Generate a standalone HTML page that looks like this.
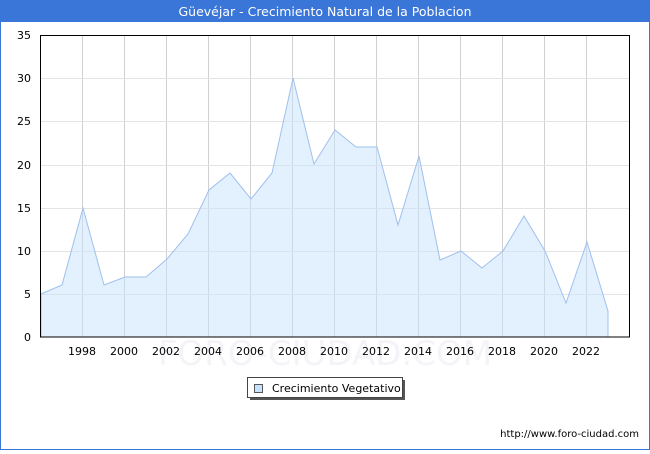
<!DOCTYPE html>
<html><head><meta charset="utf-8"><style>
html,body{margin:0;padding:0;background:#fff}
body{width:650px;height:450px;overflow:hidden;font-family:"DejaVu Sans","Liberation Sans",sans-serif}
</style></head><body>
<svg width="650" height="450" xmlns="http://www.w3.org/2000/svg" font-family="DejaVu Sans, Liberation Sans, sans-serif">
<rect x="0.5" y="0.5" width="649" height="449" fill="#fff" stroke="#3a75d8" stroke-width="1"/>
<rect x="0" y="0" width="650" height="22" fill="#3a75d8"/>
<text x="325" y="16" font-size="12.5" fill="#fff" text-anchor="middle">Güevéjar - Crecimiento Natural de la Poblacion</text>
<text x="325" y="365" font-size="34" fill="#f4f4f8" text-anchor="middle">FORO-CIUDAD.COM</text>
<g stroke="#d0d0d0" stroke-width="1">
<line x1="82.5" y1="35" x2="82.5" y2="337"/><line x1="124.5" y1="35" x2="124.5" y2="337"/><line x1="166.5" y1="35" x2="166.5" y2="337"/><line x1="208.5" y1="35" x2="208.5" y2="337"/><line x1="250.5" y1="35" x2="250.5" y2="337"/><line x1="292.5" y1="35" x2="292.5" y2="337"/><line x1="334.5" y1="35" x2="334.5" y2="337"/><line x1="376.5" y1="35" x2="376.5" y2="337"/><line x1="418.5" y1="35" x2="418.5" y2="337"/><line x1="460.5" y1="35" x2="460.5" y2="337"/><line x1="502.5" y1="35" x2="502.5" y2="337"/><line x1="544.5" y1="35" x2="544.5" y2="337"/><line x1="586.5" y1="35" x2="586.5" y2="337"/>
</g>
<g stroke="#e4e4e4" stroke-width="1">
<line x1="40" y1="294.5" x2="630" y2="294.5"/><line x1="40" y1="251.5" x2="630" y2="251.5"/><line x1="40" y1="208.5" x2="630" y2="208.5"/><line x1="40" y1="165.5" x2="630" y2="165.5"/><line x1="40" y1="121.5" x2="630" y2="121.5"/><line x1="40" y1="78.5" x2="630" y2="78.5"/>
</g>
<polygon fill="rgba(200,225,252,0.5)" stroke="#9fc0ee" stroke-width="1" points="41,337 41,294 62,285 83,208 104,285 125,277 146,277 167,259 188,234 209,190 230,173 251,199 272,173 293,78 314,164 335,130 356,147 377,147 398,225 419,156 440,260 461,251 482,268 503,251 524,216 545,251 566,303 587,242 608,311 608,337"/>
<rect x="40.5" y="35.5" width="589" height="301.5" fill="none" stroke="#000" stroke-width="1"/>
<g font-size="11" fill="#000" text-anchor="end">
<text x="31" y="341">0</text><text x="31" y="298">5</text><text x="31" y="255">10</text><text x="31" y="212">15</text><text x="31" y="169">20</text><text x="31" y="125">25</text><text x="31" y="82">30</text><text x="31" y="39">35</text>
</g>
<g font-size="11" fill="#000" text-anchor="middle">
<text x="82" y="355">1998</text><text x="124" y="355">2000</text><text x="166" y="355">2002</text><text x="208" y="355">2004</text><text x="250" y="355">2006</text><text x="292" y="355">2008</text><text x="334" y="355">2010</text><text x="376" y="355">2012</text><text x="418" y="355">2014</text><text x="460" y="355">2016</text><text x="502" y="355">2018</text><text x="544" y="355">2020</text><text x="586" y="355">2022</text>
</g>
<rect x="250" y="380" width="155" height="20" fill="#555"/>
<rect x="247.5" y="377.5" width="155" height="20" fill="#fff" stroke="#444"/>
<rect x="254.5" y="384.5" width="8" height="8" fill="#c8e1fc" stroke="#555"/>
<text x="272" y="392" font-size="11" fill="#000">Crecimiento Vegetativo</text>
<text x="639" y="437" font-size="10" fill="#000" text-anchor="end">http://www.foro-ciudad.com</text>
</svg>
</body></html>
